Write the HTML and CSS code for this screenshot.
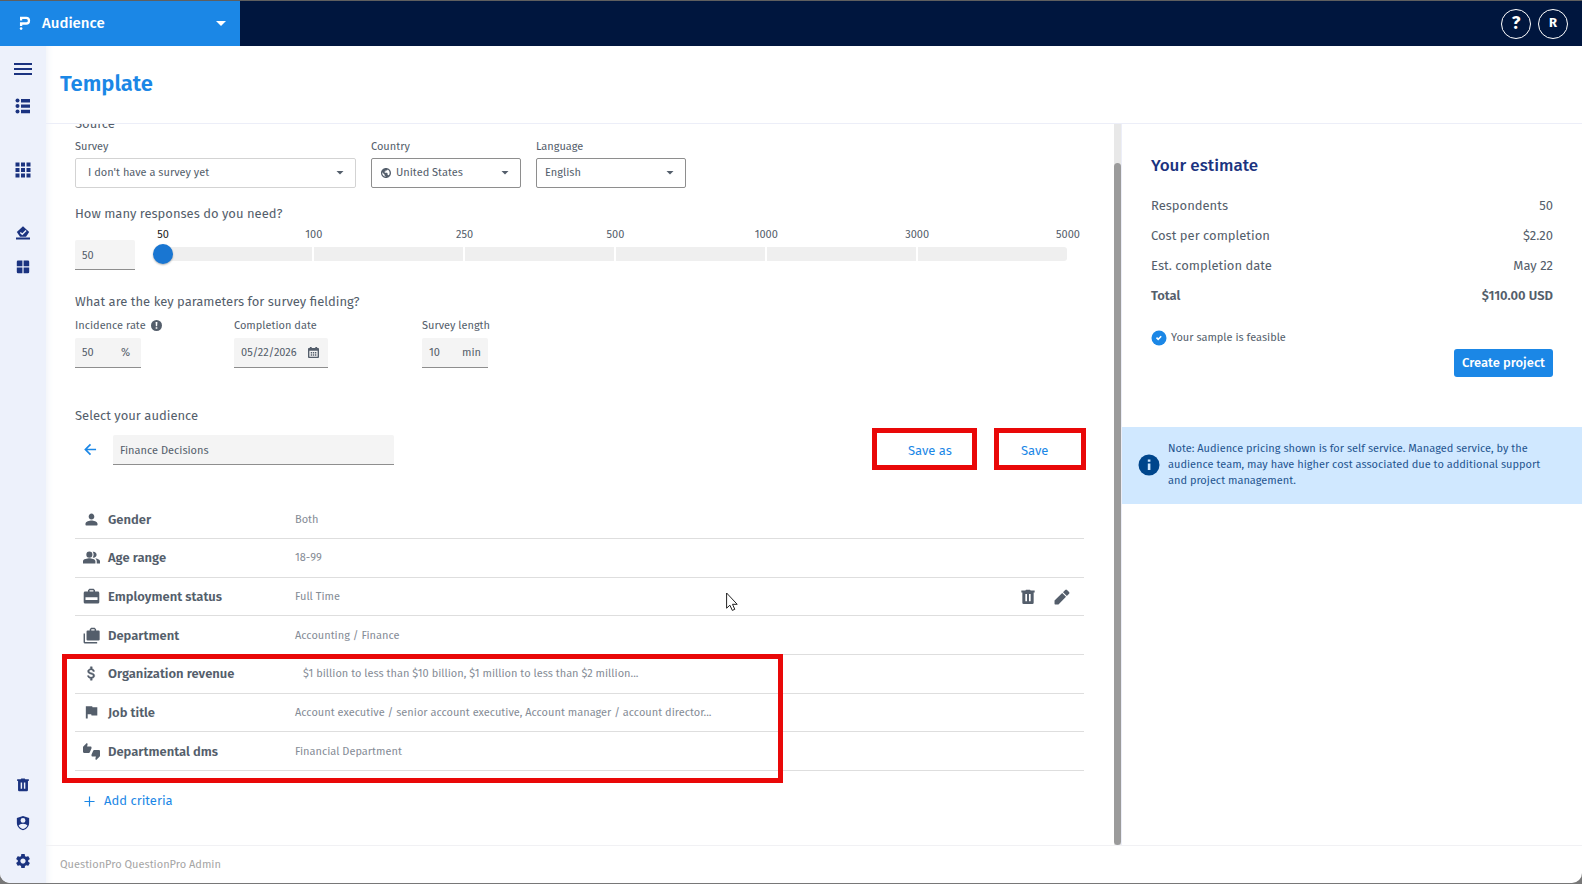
FILE: index.html
```html
<!DOCTYPE html>
<html lang="en">
<head>
    <meta charset="UTF-8">
    <meta name="viewport" content="width=device-width, initial-scale=1.0">
    <title>Audience - Template</title>
    <link rel="stylesheet" href="styles.css">
</head>
<body>

<div class="app">
    <!-- Top bar -->
    <header class="topbar">
        <button class="product-switch">
            <svg class="logo" viewBox="0 0 12 14"><path d="M1 1.9h6.2a2.8 2.8 0 0 1 0 5.6H2.1v2.6" fill="none" stroke="currentColor" stroke-width="2.3"/><path d="M1 3v1.6h2.2V3z" fill="currentColor"/><circle cx="2.1" cy="12.6" r="1.3" fill="currentColor"/></svg>
            <span>Audience</span>
            <svg class="switch-arrow" viewBox="0 0 10 5"><path d="M0 0h10L5 5z"/></svg>
        </button>
        <div class="topbar-actions">
            <button class="round-btn help">?</button>
            <button class="round-btn">R</button>
        </div>
    </header>

    <div class="shell">
        <!-- Sidebar -->
        <nav class="sidebar">
            <div class="nav-group nav-top">
                <a href="#" aria-label="Menu"><svg viewBox="0 0 18 18"><path d="M0 3h18v2H0zM0 8h18v2H0zM0 13h18v2H0z"/></svg></a>
                <a href="#" aria-label="Projects"><svg viewBox="0 0 18 18"><circle cx="3.5" cy="3.5" r="2"/><circle cx="3.5" cy="9" r="2"/><circle cx="3.5" cy="14.5" r="2"/><path d="M7 2h9v3.400H7zM7 7.400h9v3.400H7zM7 12.800h9v3.400H7z"/></svg></a>
            </div>
            <div class="nav-group nav-apps">
                <a href="#" aria-label="Apps"><svg viewBox="0 0 18 18"><path d="M1.500 1.500h4v4h-4zM7 1.500h4v4H7zM12.500 1.500h4v4h-4zM1.500 7h4v4h-4zM7 7h4v4H7zM12.500 7h4v4h-4zM1.500 12.500h4v4h-4zM7 12.500h4v4H7zM12.500 12.500h4v4h-4z"/></svg></a>
            </div>
            <div class="nav-group nav-tools">
                <a href="#" aria-label="Polls"><svg viewBox="0 0 18 18"><path d="M9 2.200l6.200 5.800L12 12.800H6L2.800 8z"/><path d="M2 13.600h14v2H2z"/><path d="M6.300 8.400l2 1.900 3.800-3.900" fill="none" stroke="#edf1fb" stroke-width="1.400"/></svg></a>
                <a href="#" aria-label="Dashboard"><svg viewBox="0 0 18 18"><path d="M4 2.600h4.400v5.600H2.800V3.800A1.200 1.200 0 0 1 4 2.600zM9.600 2.600H14a1.200 1.200 0 0 1 1.200 1.200v4.400H9.600zM2.800 9.600h5.600v5.600H4A1.200 1.200 0 0 1 2.800 14zM9.600 9.600h5.600V14a1.200 1.200 0 0 1-1.200 1.200H9.600z"/></svg></a>
            </div>
            <div class="nav-group nav-bottom">
                <a href="#" aria-label="Trash"><svg class="small" viewBox="0 0 24 24"><use href="#i-trash"/></svg></a>
                <a href="#" aria-label="Account"><svg viewBox="0 0 24 24"><path fill-rule="evenodd" d="M12 1.500L2.800 4.500V12c0 5.200 4 9.500 9.200 11 5.200-1.500 9.200-5.800 9.200-11V4.500zM12 4.400a3.700 3.700 0 1 1 0 7.400 3.700 3.700 0 0 1 0-7.400zm0 8.800c2.700 0 6 1.200 6.600 3-1.400 2.100-3.700 4-6.600 4.700-2.900-.7-5.200-2.600-6.600-4.700.6-1.800 3.900-3 6.600-3z"/></svg></a>
                <a href="#" aria-label="Settings"><svg viewBox="1 1 22 22"><path d="M19.140 12.940c.04-.3.06-.61.06-.94 0-.32-.02-.64-.07-.94l2.030-1.580c.18-.14.23-.41.12-.61l-1.920-3.320c-.12-.22-.37-.29-.59-.22l-2.390.96c-.5-.38-1.030-.7-1.620-.94l-.36-2.540c-.04-.24-.24-.41-.48-.41h-3.840c-.24 0-.43.17-.47.41l-.36 2.540c-.59.24-1.130.57-1.620.94l-2.390-.96c-.22-.08-.47 0-.59.22L2.740 8.870c-.12.21-.08.47.12.61l2.030 1.580c-.05.3-.09.63-.09.94s.02.64.07.94l-2.030 1.580c-.18.14-.23.41-.12.61l1.920 3.320c.12.22.37.29.59.22l2.390-.96c.5.38 1.030.7 1.620.94l.36 2.540c.05.24.24.41.48.41h3.840c.24 0 .44-.17.47-.41l.36-2.540c.59-.24 1.130-.56 1.620-.94l2.390.96c.22.08.47 0 .59-.22l1.920-3.320c.12-.22.07-.47-.12-.61l-2.010-1.580zM12 15.600c-1.980 0-3.600-1.620-3.600-3.600s1.620-3.600 3.600-3.600 3.600 1.620 3.600 3.600-1.620 3.600-3.600 3.600z"/></svg></a>
            </div>
        </nav>

        <div class="page">
            <div class="page-header">
                <h1>Template</h1>
            </div>

            <div class="columns">
                <main class="builder">
                    <div class="builder-content">
                        <h2 class="section-title source-title">Source</h2>

                        <!-- Source -->
                        <div class="source-row">
                            <div class="source-item survey">
                                <label class="label" for="survey">Survey</label>
                                <div class="select-box light">
                                    <select id="survey"><option>I don't have a survey yet</option></select>
                                    <svg class="caret" viewBox="0 0 8 4"><path d="M.5 0h7L4 3.500z"/></svg>
                                </div>
                            </div>
                            <div class="source-item country">
                                <label class="label" for="country">Country</label>
                                <div class="select-box">
                                    <svg class="globe" viewBox="2 2 20 20"><path d="M12 2C6.480 2 2 6.480 2 12s4.480 10 10 10 10-4.480 10-10S17.520 2 12 2zm-1 17.500c-3.500-.49-6.500-3.500-6.500-7.500 0-.62.08-1.210.21-1.790L9 15v1c0 1.100.9 2 2 2v1.500zm6.500-2.540c-.26-.81-1-1.390-1.900-1.390h-.6v-3c0-.55-.45-1-1-1H8v-2h2c.55 0 1-.45 1-1V7h2c1.100 0 2-.9 2-2 2.700 1.300 4.300 3.800 4.300 7 0 2.080-.6 3.570-1.800 4.960z"/><path d="M5 6.500h4.500L8 9.500 10.500 12 9 14.500 5 11z"/></svg>
                                    <select id="country"><option>United States</option></select>
                                    <svg class="caret" viewBox="0 0 8 4"><path d="M.5 0h7L4 3.500z"/></svg>
                                </div>
                            </div>
                            <div class="source-item">
                                <label class="label" for="language">Language</label>
                                <div class="select-box">
                                    <select id="language"><option>English</option></select>
                                    <svg class="caret" viewBox="0 0 8 4"><path d="M.5 0h7L4 3.500z"/></svg>
                                </div>
                            </div>
                        </div>

                        <!-- Responses -->
                        <h2 class="section-title responses-title">How many responses do you need?</h2>
                        <div class="responses-row">
                            <div class="field count"><input type="text" value="50" aria-label="Number of responses"></div>
                            <div class="slider">
                                <div class="scale">
                                    <span class="active">50</span>
                                    <span>100</span>
                                    <span>250</span>
                                    <span>500</span>
                                    <span>1000</span>
                                    <span>3000</span>
                                    <span>5000</span>
                                </div>
                                <div class="track-box">
                                    <div class="track"><i></i><i></i><i></i><i></i><i></i><i></i></div>
                                    <input type="range" min="0" max="6" value="0" aria-label="Responses">
                                </div>
                            </div>
                        </div>

                        <!-- Parameters -->
                        <h2 class="section-title params-title">What are the key parameters for survey fielding?</h2>
                        <div class="params-row">
                            <div>
                                <label class="label" for="incidence">Incidence rate <svg class="alert" viewBox="0 0 12 12"><circle cx="6" cy="6" r="6"/><path d="M5 2.200h2l-.3 4.600H5.300zM5.100 7.800h1.800v1.700H5.100z" fill="#fff"/></svg></label>
                                <div class="field short percent"><input id="incidence" type="text" value="50"><span>%</span></div>
                            </div>
                            <div>
                                <label class="label" for="completion">Completion date</label>
                                <div class="field date"><input id="completion" type="text" value="05/22/2026"><svg class="calendar" viewBox="0 0 12 12"><path fill-rule="evenodd" d="M2 0h2v1h4V0h2v1h1a1 1 0 0 1 1 1v9a1 1 0 0 1-1 1H1a1 1 0 0 1-1-1V2a1 1 0 0 1 1-1h1zM1.500 4v6.500h9V4z"/><path d="M3 5.500h1.500V7H3zM5.300 5.500h1.500V7H5.300zM7.600 5.500h1.500V7H7.600zM3 8h1.500v1.500H3zM5.300 8h1.500v1.500H5.300zM7.600 8h1.500v1.500H7.600z"/></svg></div>
                            </div>
                            <div>
                                <label class="label" for="length">Survey length</label>
                                <div class="field short"><input id="length" type="text" value="10"><span>min</span></div>
                            </div>
                        </div>

                        <!-- Audience -->
                        <h2 class="section-title audience-title">Select your audience</h2>
                        <div class="audience-bar">
                            <button class="back" aria-label="Back"><svg viewBox="0 0 14 14"><path d="M13 7H2M7 1.500L1.500 7 7 12.500" fill="none" stroke="currentColor" stroke-width="1.800"/></svg></button>
                            <div class="field audience-name"><input type="text" value="Finance Decisions" aria-label="Audience name"></div>
                            <div class="highlight save-as"><button class="link-btn">Save as</button></div>
                            <div class="highlight save"><button class="link-btn">Save</button></div>
                        </div>

                        <div class="criteria-box">
                            <table class="criteria">
                                <tbody>
                                <tr>
                                    <td class="icon"><svg viewBox="0 0 24 24"><path d="M12 12c2.210 0 4-1.790 4-4s-1.790-4.500-4-4.500-4 2.290-4 4.500 1.790 4 4 4zm0 1.500c-2.670 0-8.500 1.340-8.500 4.500v1.500a1 1 0 0 0 1 1h15a1 1 0 0 0 1-1V18c0-3.160-5.830-4.500-8.500-4.500z"/></svg></td>
                                    <th scope="row">Gender</th>
                                    <td class="value">Both</td>
                                    <td class="tools"></td>
                                </tr>
                                <tr>
                                    <td class="icon"><svg viewBox="0 0 24 24"><circle cx="9" cy="8" r="4.300"/><path d="M9 13c-2.670 0-9 1.340-9 4v3.300h17.500V17c0-2.660-5.830-4-8.500-4zM16.670 13.130C18.440 14.060 19.400 15.320 19.400 17v3.300H24V17c0-2.180-4.570-3.470-7.330-3.870zM15 12.200c2.210 0 4.200-1.990 4.200-4.200S17.210 3.800 15 3.800c-.47 0-.91.1-1.330.24C14.500 5.270 15 6.580 15 8s-.5 2.730-1.330 3.960c.42.14.86.24 1.330.24z"/></svg></td>
                                    <th scope="row">Age range</th>
                                    <td class="value">18-99</td>
                                    <td class="tools"></td>
                                </tr>
                                <tr>
                                    <td class="icon"><svg viewBox="0 0 24 24"><path fill-rule="evenodd" d="M9 1h6l2 2v2h4a2 2 0 0 1 2 2V20a2 2 0 0 1-2 2H3a2 2 0 0 1-2-2V7a2 2 0 0 1 2-2h4V3zM9.300 3.200V5h5.400V3.200zM3.500 13v4h17v-4z"/></svg></td>
                                    <th scope="row">Employment status</th>
                                    <td class="value">Full Time</td>
                                    <td class="tools">
                                        <button aria-label="Delete"><svg viewBox="0 0 24 24"><use href="#i-trash"/></svg></button>
                                        <button aria-label="Edit"><svg viewBox="0 0 24 24"><path d="M.8 17.300v4.900a1 1 0 0 0 1 1h4.900L18 11.700 12.300 6zM22.600 7.200a1.900 1.900 0 0 0 0-2.700l-3.100-3.100a1.900 1.900 0 0 0-2.700 0l-3.300 3.300 5.800 5.800z"/></svg></button>
                                    </td>
                                </tr>
                                <tr>
                                    <td class="icon"><svg viewBox="0 0 24 24"><path fill-rule="evenodd" d="M11.500 1h5l2 2v2H22a1.500 1.500 0 0 1 1.500 1.500v11A1.500 1.500 0 0 1 22 19H6.500A1.500 1.500 0 0 1 5 17.500v-11A1.500 1.500 0 0 1 6.500 5h3V3zM11.700 3.200V5h4.600V3.200z"/><path d="M.8 9h2v12.200H20v2H2.300A1.500 1.500 0 0 1 .8 21.700z"/></svg></td>
                                    <th scope="row">Department</th>
                                    <td class="value">Accounting / Finance</td>
                                    <td class="tools"></td>
                                </tr>
                                <tr>
                                    <td class="icon"><svg viewBox="0 0 24 24"><path stroke="currentColor" stroke-width=".6" d="M11.800 10.900c-2.270-.59-3-1.200-3-2.150 0-1.090 1.010-1.850 2.700-1.850 1.780 0 2.440.85 2.500 2.100h2.210c-.07-1.720-1.120-3.300-3.210-3.810V2.500h-2.600v2.660c-1.940.42-3.900 1.680-3.900 3.610 0 2.310 1.910 3.460 4.700 4.130 2.500.6 3 1.480 3 2.410 0 .69-.49 1.790-2.700 1.790-2.060 0-2.870-.92-2.980-2.100h-2.200c.12 2.190 1.760 3.420 4.080 3.830V21.500H13v-2.650c1.950-.37 3.500-1.500 3.500-3.550 0-2.840-2.430-3.810-4.700-4.400z"/></svg></td>
                                    <th scope="row">Organization revenue</th>
                                    <td class="value indent">$1 billion to less than $10 billion, $1 million to less than $2 million...</td>
                                    <td class="tools"></td>
                                </tr>
                                <tr>
                                    <td class="icon"><svg viewBox="0 0 24 24"><path d="M13.400 4.500L13 3H4v17.500h2.600v-6.200h5l.4 2h8.200V4.500z"/></svg></td>
                                    <th scope="row">Job title</th>
                                    <td class="value">Account executive / senior account executive, Account manager / account director...</td>
                                    <td class="tools"></td>
                                </tr>
                                <tr>
                                    <td class="icon"><svg viewBox="0 0 24 24"><path d="M12 6c0-.55-.45-1-1-1H5.820l.66-3.180.02-.23c0-.31-.13-.59-.33-.8L5.380 0 .44 4.940C.17 5.210 0 5.590 0 6v6.500c0 .83.67 1.500 1.500 1.500h6.750c.62 0 1.150-.38 1.380-.91l2.260-5.290c.07-.17.11-.36.11-.55V6zm10.500 4h-6.750c-.62 0-1.150.38-1.380.91l-2.260 5.290c-.07.17-.11.36-.11.55V18c0 .55.45 1 1 1h5.180l-.66 3.180-.02.24c0 .31.13.59.33.8l.79.78 4.940-4.940c.27-.27.44-.65.44-1.060v-6.500c0-.83-.67-1.500-1.500-1.500z"/></svg></td>
                                    <th scope="row">Departmental dms</th>
                                    <td class="value">Financial Department</td>
                                    <td class="tools"></td>
                                </tr>
                                </tbody>
                            </table>
                            <div class="criteria-highlight"></div>
                            <svg class="pointer" viewBox="0 0 12 19"><path d="M.6 1v15.200l3.300-3 2.400 5.200 2.500-1.100-2.300-5h4.700z" fill="#fff" stroke="#222" stroke-width="1"/></svg>
                        </div>

                        <button class="link-btn add-criteria"><svg viewBox="0 0 12 12"><path d="M6 .5v11M.5 6h11" stroke="currentColor" stroke-width="1.300"/></svg>Add criteria</button>
                    </div>
                    <div class="scrollbar"><div class="thumb"></div></div>
                </main>

                <!-- Estimate -->
                <aside class="estimate">
                    <div class="estimate-body">
                        <h2>Your estimate</h2>
                        <dl>
                            <div><dt>Respondents</dt><dd>50</dd></div>
                            <div><dt>Cost per completion</dt><dd>$2.20</dd></div>
                            <div><dt>Est. completion date</dt><dd>May 22</dd></div>
                            <div class="total"><dt>Total</dt><dd>$110.00 USD</dd></div>
                        </dl>
                        <p class="feasible"><svg viewBox="0 0 16 16"><circle cx="8" cy="8" r="7.500" fill="#1b87e6"/><path d="M5.500 7.600l1.700 1.700 3-3" fill="none" stroke="#fff" stroke-width="1.600"/></svg>Your sample is feasible</p>
                        <button class="create">Create project</button>
                    </div>
                    <div class="note">
                        <svg viewBox="0 0 22 22"><circle cx="11" cy="11" r="10.500" fill="#00468c"/><path d="M9.800 5.500h2.600v2.200H9.800zM9.800 9.500h2.600V16H9.800z" fill="#d0e8ff"/></svg>
                        <p>Note: Audience pricing shown is for self service. Managed service, by the audience team, may have higher cost associated due to additional support and project management.</p>
                    </div>
                </aside>
            </div>

            <footer class="footer">QuestionPro QuestionPro Admin</footer>
        </div>
    </div>
</div>

<!-- Shared icons -->
<svg class="sprite">
    <symbol id="i-trash" viewBox="0 0 24 24"><path fill-rule="evenodd" d="M9 1h6l1 1.300h6v3h-1.500V20.500a2 2 0 0 1-2 2h-13a2 2 0 0 1-2-2V5.300H2v-3h6zM8 7.500v11h2.500v-11zM13.500 7.500v11H16v-11z"/></symbol>
</svg>

</body>
</html>
```
FILE: styles.css
```css
* {
    box-sizing: border-box;
}

body {
    font-family: "Fira Sans", "Noto Sans", sans-serif;
    font-size: 13px;
    margin: 0;
    background-color: #777;
    color: #545e6b;
}

h1, h2, p, dl, dd {
    margin: 0;
}

button, input, select {
    font: inherit;
    color: inherit;
    background: none;
    border: none;
    padding: 0;
    margin: 0;
}

button {
    cursor: pointer;
}

svg {
    display: block;
    fill: currentColor;
    flex-shrink: 0;
}

.sprite {
    display: none;
}

.app {
    display: flex;
    flex-direction: column;
    height: calc(100vh - 1px);
    border-top: 1px solid #5f5f5f;
    border-radius: 0 0 10px 10px;
    background-color: #fff;
    overflow: hidden;
}

/* Top bar */
.topbar {
    display: flex;
    justify-content: space-between;
    height: 45px;
    flex-shrink: 0;
    background-color: #00163e;
    color: #fff;
}

.product-switch {
    display: flex;
    align-items: center;
    width: 240px;
    padding: 0 14px 1px 19px;
    background-color: #1b87e6;
    font-size: 15px;
    font-weight: 500;
}

.logo {
    width: 12px;
    height: 14px;
    margin-right: 11px;
}

.switch-arrow {
    width: 10px;
    height: 5px;
    margin-left: auto;
}

.topbar-actions {
    display: flex;
    align-items: center;
    gap: 7px;
    padding-right: 14px;
}

.round-btn {
    width: 30px;
    height: 30px;
    padding-bottom: 2px;
    border: 1px solid #fff;
    border-radius: 50%;
    font-weight: 700;
}

.round-btn.help {
    font-size: 18px;
    line-height: 20px;
}

/* Sidebar */
.shell {
    display: flex;
    flex: 1;
    min-height: 0;
}

.sidebar {
    display: flex;
    flex-direction: column;
    align-items: center;
    width: 46px;
    padding: 14px 0 13px;
    background-color: #edf1fb;
    color: #1b3380;
}

.nav-group {
    display: flex;
    flex-direction: column;
}

.nav-group a {
    color: inherit;
}

.nav-group svg {
    width: 18px;
    height: 18px;
}

.nav-top {
    gap: 19px;
}

.nav-apps {
    margin-top: 46px;
}

.nav-tools {
    margin-top: 45px;
    gap: 16px;
}

.nav-bottom {
    margin-top: auto;
    gap: 20px;
}

.nav-bottom svg {
    padding: 1px;
}

.nav-bottom .small {
    padding: 2px;
}

/* Page */
.page {
    display: flex;
    flex-direction: column;
    flex: 1;
    min-width: 0;
    box-shadow: inset 6px 0 6px -4px #f1f3f8;
}

.page-header {
    display: flex;
    align-items: center;
    height: 78px;
    flex-shrink: 0;
    padding: 0 14px 2px;
    border-bottom: 1px solid #eceef8;
}

.page-header h1 {
    color: #1b87e6;
    font-size: 22px;
    font-weight: 600;
}

.columns {
    display: flex;
    flex: 1;
    min-height: 0;
}

.footer {
    display: flex;
    align-items: center;
    height: 38px;
    flex-shrink: 0;
    padding: 0 14px;
    border-top: 1px solid #f1f1f4;
    color: #a5a5a5;
    font-size: 11px;
}

/* Builder */
.builder {
    display: flex;
    flex: 1;
    min-width: 0;
    overflow: hidden;
}

.builder-content {
    flex: 1;
    min-width: 0;
    padding: 0 30px 0 29px;
}

.scrollbar {
    width: 7px;
    padding-top: 39px;
    background-color: #e8e8e8;
}

.thumb {
    height: 100%;
    border-radius: 4px;
    background-color: #9b9b9b;
}

.section-title {
    font-size: 13px;
    font-weight: 400;
    line-height: 18px;
}

.source-title {
    margin-top: -9px;
}

.label {
    display: flex;
    align-items: center;
    gap: 5px;
    margin-bottom: 4px;
    font-size: 11px;
    line-height: 16px;
}

.source-row {
    display: flex;
    gap: 15px;
    margin-top: 6px;
}

.source-row .label {
    margin-bottom: 3px;
}

.source-item {
    width: 150px;
}

.source-item.survey {
    width: 281px;
}

.select-box {
    display: grid;
    align-items: center;
    height: 30px;
    border: 1px solid #8e8e8e;
    border-radius: 2px;
}

.select-box.light {
    border-color: #d3d3d3;
}

.select-box > * {
    grid-area: 1 / 1;
}

.select-box select {
    appearance: none;
    width: 100%;
    height: 28px;
    padding: 0 24px 2px 8px;
    font-size: 11px;
}

.survey select {
    padding-left: 12px;
}

.country select {
    padding-left: 24px;
}

.globe {
    width: 10px;
    height: 10px;
    margin-left: 9px;
}

.caret {
    width: 8px;
    height: 4px;
    justify-self: end;
    margin-right: 11px;
    pointer-events: none;
}

.field {
    display: flex;
    align-items: center;
    height: 30px;
    padding: 0 7px;
    background-color: #f4f4f4;
    border-bottom: 1px solid #8e8e8e;
    border-radius: 2px 2px 0 0;
    font-size: 11px;
}

.field input {
    flex: 1;
    width: 100%;
    min-width: 0;
}

.responses-title {
    margin-top: 17px;
}

.responses-row {
    display: flex;
    align-items: flex-end;
    gap: 18px;
    height: 43px;
    margin-top: 4px;
    padding-right: 6px;
}

.field.count {
    width: 60px;
    padding-top: 2px;
}

.slider {
    flex: 1;
    align-self: flex-start;
}

.scale {
    display: flex;
    justify-content: space-between;
    font-size: 11px;
    line-height: 16px;
    margin-bottom: 1px;
}

.scale span {
    display: flex;
    justify-content: center;
    width: 20px;
}

.scale .active {
    color: #222;
}

.track-box {
    display: grid;
    align-items: center;
}

.track-box > * {
    grid-area: 1 / 1;
}

.track {
    display: flex;
    gap: 2px;
    height: 14px;
    margin: 0 11px 0 10px;
    border-radius: 3px;
    overflow: hidden;
}

.track i {
    flex: 1;
    background-color: #efefef;
}

.track-box input {
    appearance: none;
    width: 100%;
    height: 20px;
}

.track-box input::-webkit-slider-thumb {
    appearance: none;
    width: 20px;
    height: 20px;
    border-radius: 50%;
    background-color: #1976d2;
    box-shadow: 0 1px 2px rgba(0, 0, 0, 0.3);
}

.params-title {
    margin-top: 23px;
}

.params-row {
    display: grid;
    grid-template-columns: 159px 188px auto;
    margin-top: 7px;
}

.field.short {
    width: 66px;
}

.field.percent {
    padding-right: 11px;
}

.field.date {
    width: 94px;
    padding-right: 9px;
}

.alert {
    width: 11px;
    height: 11px;
    margin-bottom: 2px;
}

.calendar {
    width: 11px;
    height: 11px;
}

.audience-title {
    margin-top: 39px;
}

.audience-bar {
    display: flex;
    align-items: center;
    margin: 3px -2px 0 0;
}

.back {
    width: 38px;
    padding-left: 9px;
    color: #1b87e6;
}

.back svg {
    width: 13px;
    height: 13px;
}

.field.audience-name {
    width: 281px;
    margin-top: 2px;
    margin-right: auto;
    padding-top: 2px;
}

.link-btn {
    color: #1b87e6;
    font-size: 13px;
    line-height: 18px;
}

.highlight {
    display: flex;
    align-items: center;
    height: 42px;
    padding-top: 3px;
    border: 5px solid #e90808;
}

.save-as {
    width: 105px;
    margin-right: 17px;
    padding-left: 31px;
}

.save {
    width: 92px;
    padding-left: 22px;
}

.criteria-box {
    position: relative;
    margin-top: 31px;
}

.criteria {
    width: 100%;
    height: 270px;
    border-collapse: collapse;
}

.criteria tr {
    border-bottom: 1px solid #dedede;
}

.criteria td, .criteria th {
    padding: 0;
}

.criteria .icon {
    width: 33px;
    padding-left: 8px;
}

.criteria .icon svg {
    width: 17px;
    height: 17px;
}

.criteria th {
    width: 187px;
    font-size: 13px;
    font-weight: 600;
    text-align: left;
}

.criteria .value {
    color: #858c96;
    font-size: 11px;
}

.criteria .indent {
    padding-left: 8px;
}

.criteria .tools {
    width: 64px;
}

.tools button {
    float: left;
    margin-right: 18px;
}

.tools button + button {
    margin-right: 0;
}

.tools svg {
    width: 16px;
    height: 16px;
}

/* Red frame over the last three criteria */
.criteria-highlight {
    position: absolute;
    left: -13px;
    width: 721px;
    top: 153px;
    bottom: -12px;
    border: 5px solid #e90808;
    pointer-events: none;
}

.pointer {
    position: absolute;
    left: 651px;
    top: 91px;
    width: 12px;
    height: 19px;
}

.add-criteria {
    display: flex;
    align-items: center;
    gap: 9px;
    margin-top: 21px;
    padding-left: 9px;
}

.add-criteria svg {
    width: 11px;
    height: 11px;
}

/* Estimate */
.estimate {
    width: 461px;
    border-left: 1px solid #eceef8;
}

.estimate-body {
    display: flex;
    flex-direction: column;
    padding: 31px 29px 50px;
}

.estimate h2 {
    color: #1b3380;
    font-size: 17px;
    font-weight: 500;
    line-height: 22px;
    margin-bottom: 14px;
}

.estimate dl div {
    display: flex;
    justify-content: space-between;
    line-height: 30px;
    font-size: 13px;
}

.estimate .total {
    font-weight: 600;
}

.feasible {
    display: flex;
    align-items: center;
    gap: 4px;
    margin-top: 18px;
    font-size: 11px;
    line-height: 18px;
}

.feasible svg {
    width: 16px;
    height: 16px;
}

.create {
    align-self: flex-end;
    height: 28px;
    margin-top: 2px;
    padding: 0 8px 1px;
    border-radius: 3px;
    background-color: #1b87e6;
    color: #fff;
    font-weight: 500;
}

.note {
    display: flex;
    align-items: center;
    gap: 8px;
    padding: 14px 24px 15px 16px;
    background-color: #d0e8ff;
    color: #1f5590;
    font-size: 11px;
    line-height: 16px;
}

.note svg {
    width: 22px;
    height: 22px;
}
```
